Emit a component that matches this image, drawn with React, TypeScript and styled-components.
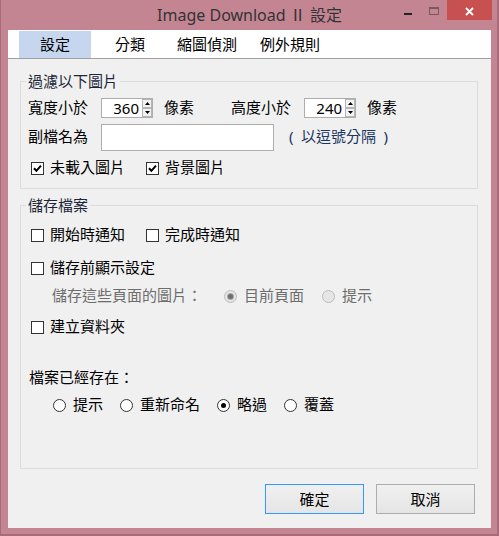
import React from 'react';
import styled, { createGlobalStyle } from 'styled-components';

const GlobalStyle = createGlobalStyle`
  html, body { margin: 0; padding: 0; background: #ffffff; }
  body { font-family: "Noto Sans", "Noto Sans CJK TC", sans-serif; }
  * { box-sizing: border-box; }
`;

const Window = styled.div`
  width: 499px;
  height: 536px;
  background: #c48593;
  border-left: 1px solid #a86b7a;
  border-right: 2px solid #a86b7a;
  border-bottom: 2px solid #a86b7a;
  padding: 0 6px 6px 7px;
  display: flex;
  flex-direction: column;
`;

const TitleBar = styled.div`
  height: 30px;
  flex: none;
  display: grid;
  grid-template-columns: 1fr auto 1fr;
`;

const TitleText = styled.div`
  grid-column: 2;
  font-size: 16px;
  line-height: 30px;
  color: #333333;
  white-space: nowrap;
`;

const Controls = styled.div`
  grid-column: 3;
  justify-self: end;
  align-self: start;
  display: flex;
  margin-right: -1px;
`;

const CtrlButton = styled.div<{ $w: number; $close?: boolean }>`
  width: ${(p) => p.$w}px;
  height: 20px;
  background: ${(p) => (p.$close ? '#c75050' : 'transparent')};
  display: flex;
  justify-content: center;
  align-items: flex-start;
`;

const MinGlyph = styled.span`
  width: 8px;
  height: 2px;
  margin-top: 13px;
  background: #222222;
`;

const MaxGlyph = styled.span`
  width: 10px;
  height: 8px;
  margin-top: 7px;
  border: 1px solid #7a5862;
  border-top-width: 2px;
`;

const Client = styled.div`
  flex: 1;
  background: #f0f0f0;
  display: flex;
  flex-direction: column;
`;

const MenuBar = styled.div`
  height: 29px;
  flex: none;
  background: #ffffff;
  border-bottom: 1px solid #a0a0a0;
  padding: 1px 0 0 11px;
  display: flex;
`;

const MenuItem = styled.div<{ $active?: boolean; $ml?: number }>`
  height: 27px;
  line-height: 27px;
  font-size: 15px;
  color: #000000;
  padding: 0 ${(p) => (p.$active ? 21 : 0)}px;
  margin-left: ${(p) => p.$ml ?? 0}px;
  background: ${(p) => (p.$active ? '#c6d6ee' : 'transparent')};
  white-space: nowrap;
`;

const Content = styled.div`
  flex: 1;
  padding: 22px 13px 0 12px;
  display: flex;
  flex-direction: column;
`;

const GroupBox = styled.div<{ $pt: number; $pb: number; $mt?: number }>`
  position: relative;
  border: 1px solid #dcdcdc;
  padding: ${(p) => p.$pt}px 0 ${(p) => p.$pb}px;
  margin-top: ${(p) => p.$mt ?? 0}px;
  display: flex;
  flex-direction: column;
`;

const Legend = styled.span`
  position: absolute;
  top: -9px;
  left: 5px;
  padding: 0 2px;
  background: #f0f0f0;
  font-size: 15px;
  line-height: 16px;
  color: #1c2638;
  white-space: nowrap;
`;

const Row = styled.div<{ $h: number; $mt?: number; $pl: number }>`
  height: ${(p) => p.$h}px;
  margin-top: ${(p) => p.$mt ?? 0}px;
  padding-left: ${(p) => p.$pl}px;
  display: flex;
  align-items: center;
`;

const Label = styled.span<{ $ml?: number; $muted?: boolean; $hint?: boolean }>`
  font-size: 15px;
  line-height: 15px;
  padding-bottom: 2px;
  margin-left: ${(p) => p.$ml ?? 0}px;
  color: ${(p) => (p.$muted ? '#6d6d6d' : p.$hint ? '#1a3560' : '#000000')};
  white-space: pre;
`;

const SpinBox = styled.div<{ $ml: number }>`
  width: 52px;
  height: 20px;
  margin-left: ${(p) => p.$ml}px;
  border: 1px solid #adadad;
  background: #ffffff;
  display: flex;
`;

const SpinValue = styled.div`
  flex: 1;
  text-align: right;
  padding-right: 3px;
  font-size: 15px;
  line-height: 18px;
  color: #000000;
`;

const SpinButtons = styled.div`
  width: 10px;
  display: flex;
  flex-direction: column;
`;

const SpinArrow = styled.div`
  flex: 1;
  border: 1px solid #b5b5b5;
  background: #f2f2f2;
  display: flex;
  align-items: center;
  justify-content: center;
`;

const TextBox = styled.div`
  width: 173px;
  height: 27px;
  margin-left: 13px;
  border: 1px solid #adadad;
  background: #ffffff;
`;

const OptionGroup = styled.div<{ $gap: number; $ml?: number }>`
  display: flex;
  align-items: center;
  gap: ${(p) => p.$gap}px;
  margin-left: ${(p) => p.$ml ?? 0}px;
`;

const Option = styled.div<{ $gap: number }>`
  display: flex;
  align-items: center;
  gap: ${(p) => p.$gap}px;
`;

const Box = styled.span`
  width: 13px;
  height: 13px;
  border: 1px solid #333333;
  background: #ffffff;
  display: flex;
  align-items: center;
  justify-content: center;
`;

const Circle = styled.span<{ $disabled?: boolean }>`
  width: 13px;
  height: 13px;
  border-radius: 50%;
  border: 1px solid ${(p) => (p.$disabled ? '#bcbcbc' : '#333333')};
  background: ${(p) => (p.$disabled ? '#e6e6e6' : '#ffffff')};
  display: flex;
  align-items: center;
  justify-content: center;
`;

const Dot = styled.span<{ $disabled?: boolean }>`
  width: 5px;
  height: 5px;
  border-radius: 50%;
  background: ${(p) => (p.$disabled ? '#6d6d6d' : '#000000')};
  box-shadow: ${(p) => (p.$disabled ? '0 0 0 1px #a8a8a8' : 'none')};
`;

const ButtonRow = styled.div`
  display: flex;
  justify-content: flex-end;
  gap: 12px;
  margin-top: 15px;
  padding-right: 3px;
`;

const PushButton = styled.button<{ $primary?: boolean }>`
  width: 99px;
  height: 30px;
  padding: 0;
  border: 1px solid ${(p) => (p.$primary ? '#3399ff' : '#adadad')};
  background: linear-gradient(#f0f0f0, #e5e5e5);
  font-family: "Noto Sans", "Noto Sans CJK TC", sans-serif;
  font-size: 15px;
  line-height: 26px;
  color: #000000;
`;

const Checkbox = ({ checked, label }: { checked?: boolean; label: string }) => (
  <Option $gap={6}>
    <Box>
      {checked && (
        <svg width="11" height="11" viewBox="0 0 11 11">
          <path d="M2 5.2 L4.4 7.8 L9 2.6" fill="none" stroke="#000" strokeWidth="2" />
        </svg>
      )}
    </Box>
    <Label>{label}</Label>
  </Option>
);

const Radio = ({ checked, disabled, label }: { checked?: boolean; disabled?: boolean; label: string }) => (
  <Option $gap={7}>
    <Circle $disabled={disabled}>{checked && <Dot $disabled={disabled} />}</Circle>
    <Label $muted={disabled}>{label}</Label>
  </Option>
);

const Spinner = ({ value, ml }: { value: string; ml: number }) => (
  <SpinBox $ml={ml}>
    <SpinValue>{value}</SpinValue>
    <SpinButtons>
      <SpinArrow>
        <svg width="5" height="3" viewBox="0 0 5 3">
          <path d="M0 3 L2.5 0 L5 3 Z" fill="#000" />
        </svg>
      </SpinArrow>
      <SpinArrow>
        <svg width="5" height="3" viewBox="0 0 5 3">
          <path d="M0 0 L2.5 3 L5 0 Z" fill="#000" />
        </svg>
      </SpinArrow>
    </SpinButtons>
  </SpinBox>
);

export default function App() {
  return (
    <>
      <GlobalStyle />
      <Window>
        <TitleBar>
          <TitleText>Image Download Ⅱ 設定</TitleText>
          <Controls>
            <CtrlButton $w={26}>
              <MinGlyph />
            </CtrlButton>
            <CtrlButton $w={26}>
              <MaxGlyph />
            </CtrlButton>
            <CtrlButton $w={45} $close>
              <svg width="9" height="9" viewBox="0 0 9 9" style={{ marginTop: 7 }}>
                <path d="M1 1 L8 8 M8 1 L1 8" stroke="#fff" strokeWidth="1.8" />
              </svg>
            </CtrlButton>
          </Controls>
        </TitleBar>
        <Client>
          <MenuBar>
            <MenuItem $active>設定</MenuItem>
            <MenuItem $ml={24}>分類</MenuItem>
            <MenuItem $ml={32}>縮圖偵測</MenuItem>
            <MenuItem $ml={23}>例外規則</MenuItem>
          </MenuBar>
          <Content>
            <GroupBox $pt={16} $pb={12}>
              <Legend>過濾以下圖片</Legend>
              <Row $h={20} $pl={7}>
                <Label>寬度小於</Label>
                <Spinner value="360" ml={13} />
                <Label $ml={11}>像素</Label>
                <Label $ml={37}>高度小於</Label>
                <Spinner value="240" ml={13} />
                <Label $ml={11}>像素</Label>
              </Row>
              <Row $h={27} $mt={6} $pl={7}>
                <Label>副檔名為</Label>
                <TextBox />
                <Label $ml={15} $hint>{'(\u2002以逗號分隔\u2002)'}</Label>
              </Row>
              <Row $h={15} $mt={10} $pl={10}>
                <OptionGroup $gap={21}>
                  <Checkbox checked label="未載入圖片" />
                  <Checkbox checked label="背景圖片" />
                </OptionGroup>
              </Row>
            </GroupBox>
            <GroupBox $pt={22} $pb={55} $mt={16}>
              <Legend>儲存檔案</Legend>
              <Row $h={15} $pl={10}>
                <OptionGroup $gap={21}>
                  <Checkbox label="開始時通知" />
                  <Checkbox label="完成時通知" />
                </OptionGroup>
              </Row>
              <Row $h={15} $mt={18} $pl={10}>
                <Checkbox label="儲存前顯示設定" />
              </Row>
              <Row $h={16} $mt={12} $pl={31}>
                <Label $muted>儲存這些頁面的圖片：</Label>
                <OptionGroup $gap={18} $ml={22}>
                  <Radio checked disabled label="目前頁面" />
                  <Radio disabled label="提示" />
                </OptionGroup>
              </Row>
              <Row $h={15} $mt={16} $pl={10}>
                <Checkbox label="建立資料夾" />
              </Row>
              <Row $h={16} $mt={35} $pl={8}>
                <Label>檔案已經存在：</Label>
              </Row>
              <Row $h={15} $mt={12} $pl={32}>
                <OptionGroup $gap={17}>
                  <Radio label="提示" />
                  <Radio label="重新命名" />
                  <Radio checked label="略過" />
                  <Radio label="覆蓋" />
                </OptionGroup>
              </Row>
            </GroupBox>
            <ButtonRow>
              <PushButton $primary>確定</PushButton>
              <PushButton>取消</PushButton>
            </ButtonRow>
          </Content>
        </Client>
      </Window>
    </>
  );
}
